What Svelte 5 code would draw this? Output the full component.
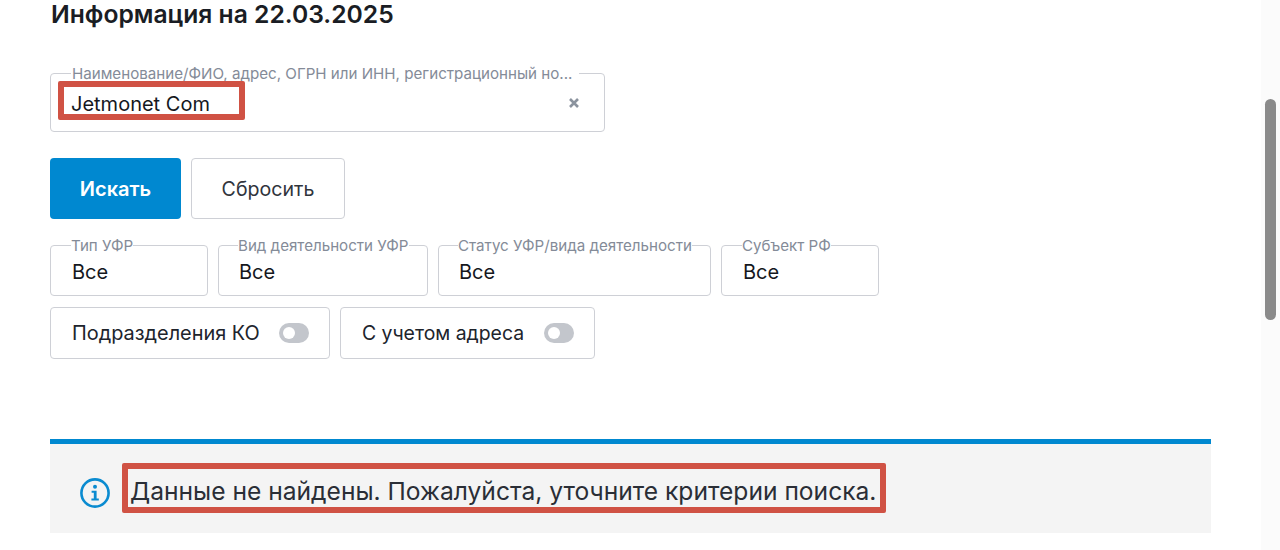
<script>
  const filters = [
    { label: 'Тип УФР', value: 'Все', width: 158, inset: 20 },
    { label: 'Вид деятельности УФР', value: 'Все', width: 210, inset: 19 },
    { label: 'Статус УФР/вида деятельности', value: 'Все', width: 273, inset: 19 },
    { label: 'Субъект РФ', value: 'Все', width: 158, inset: 20 }
  ];
  const toggles = [
    { label: 'Подразделения КО', width: 280 },
    { label: 'С учетом адреса', width: 255 }
  ];
</script>

<div class="page">
  <main class="content">
    <h1>Информация на 22.03.2025</h1>

    <fieldset class="search">
      <legend>Наименование/ФИО, адрес, ОГРН или ИНН, регистрационный но...</legend>
      <div class="search-row">
        <span class="search-value">Jetmonet Com</span>
        <svg class="clear" width="12" height="12" viewBox="0 0 12 12" aria-hidden="true">
          <path d="M2 2 L10 10 M10 2 L2 10" stroke="#8b939e" stroke-width="2.6" fill="none" />
        </svg>
      </div>
      <span class="mark mark-input"></span>
    </fieldset>

    <div class="actions">
      <button class="primary">Искать</button>
      <button class="secondary">Сбросить</button>
    </div>

    <div class="filters">
      {#each filters as f}
        <fieldset class="filter" style="width: {f.width}px; padding-left: {f.inset}px">
          <legend>{f.label}</legend>
          <span>{f.value}</span>
        </fieldset>
      {/each}
    </div>

    <div class="toggles">
      {#each toggles as t}
        <div class="toggle" style="width: {t.width}px">
          <span>{t.label}</span>
          <span class="switch"><span class="knob"></span></span>
        </div>
      {/each}
    </div>

    <section class="notice">
      <svg class="info" width="30" height="30" viewBox="0 0 30 30" aria-hidden="true">
        <circle cx="15" cy="15" r="13.6" fill="none" stroke="#0a8bd0" stroke-width="2.6" />
        <circle cx="15" cy="8.8" r="2" fill="#0a8bd0" />
        <path d="M11.6 12.8 H16.6 V20.6 H18.8 V22.6 H11.4 V20.6 H13.8 V14.8 H11.6 Z" fill="#0a8bd0" />
      </svg>
      <p class="notice-text">Данные не найдены. Пожалуйста, уточните критерии поиска.<span class="mark mark-notice"></span></p>
    </section>
  </main>

  <div class="scrollbar"><div class="thumb"></div></div>
</div>

<style>
  :global(body) {
    margin: 0;
    background: #fff;
    font-family: Inter, "Noto Sans", "Liberation Sans", sans-serif;
    color: #20242c;
  }
  .page {
    position: relative;
    height: 550px;
    overflow: hidden;
  }
  .content {
    padding: 0 69px 0 50px;
  }
  h1 {
    margin: 0;
    padding-left: 1px;
    font-size: 24.65px;
    line-height: 28px;
    font-weight: 600;
    color: #1a1d24;
  }
  fieldset {
    margin: 0;
    min-width: 0;
    box-sizing: border-box;
    border: 1px solid #ced0d6;
    border-radius: 4px;
  }
  legend {
    font-size: 15.15px;
    line-height: 17px;
    color: #848b98;
    white-space: nowrap;
  }
  .search {
    position: relative;
    margin-top: 37px;
    width: 555px;
    height: 67px;
    padding: 0 20px;
  }
  .search legend {
    padding: 0 7px 0 1px;
  }
  .search-row {
    display: flex;
    align-items: center;
    justify-content: space-between;
    height: 34px;
    margin-top: 4px;
    padding-right: 4px;
    font-size: 20px;
  }
  .search-value {
    color: #15181e;
    margin-top: 2px;
  }
  .clear {
    flex: none;
  }
  .mark {
    position: absolute;
    box-sizing: border-box;
    border: 6px solid #d05244;
    border-radius: 2px;
    pointer-events: none;
  }
  .mark-input {
    left: 7px;
    top: -1px;
    width: 187px;
    height: 39px;
  }
  .actions {
    display: flex;
    gap: 10px;
    margin-top: 26px;
  }
  button {
    height: 61px;
    box-sizing: border-box;
    border-radius: 4px;
    font-family: inherit;
    font-size: 20px;
    padding: 0;
  }
  .primary {
    width: 131px;
    background: #0088d0;
    border: none;
    color: #fff;
    font-weight: 600;
  }
  .secondary {
    width: 154px;
    background: #fff;
    border: 1px solid #ced0d6;
    color: #30343c;
    font-size: 19.6px;
  }
  .filters {
    display: flex;
    gap: 10px;
    margin-top: 18px;
  }
  .filter {
    height: 59px;
    padding: 0 21px 0 20px;
    font-size: 20px;
    color: #15181e;
  }
  .filter legend {
    padding: 0;
  }
  .filter span {
    display: block;
    line-height: 22px;
    margin-top: 7px;
    margin-left: 1px;
  }
  .toggles {
    display: flex;
    gap: 10px;
    margin-top: 11px;
  }
  .toggle {
    display: flex;
    align-items: center;
    justify-content: space-between;
    box-sizing: border-box;
    height: 52px;
    padding: 0 20px 0 21px;
    border: 1px solid #ced0d6;
    border-radius: 4px;
    font-size: 19.9px;
    color: #20242c;
  }
  .toggle:nth-child(2) {
    font-size: 19.4px;
  }
  .switch {
    display: flex;
    align-items: center;
    width: 30px;
    height: 20px;
    padding-left: 4px;
    box-sizing: border-box;
    border-radius: 10px;
    background: #c3c6cc;
  }
  .knob {
    width: 12px;
    height: 12px;
    border-radius: 50%;
    background: #fff;
  }
  .notice {
    display: flex;
    align-items: center;
    height: 94px;
    margin-top: 80px;
    padding-left: 30px;
    border-top: 5px solid #0088d0;
    box-sizing: border-box;
    background: #f4f4f4;
  }
  .info {
    flex: none;
    margin-top: 8px;
  }
  .notice-text {
    position: relative;
    margin: 4px 0 0 20px;
    font-size: 24.6px;
    line-height: 32px;
    color: #2a2e36;
    white-space: nowrap;
  }
  .mark-notice {
    left: -8px;
    top: -12px;
    width: 764px;
    height: 50px;
  }
  .scrollbar {
    position: absolute;
    top: 0;
    right: 0;
    width: 19px;
    height: 100%;
    background: #fbfbfb;
  }
  .thumb {
    position: absolute;
    left: 4px;
    top: 99px;
    width: 11px;
    height: 221px;
    border-radius: 6px;
    background: #8a8a8a;
  }
</style>
